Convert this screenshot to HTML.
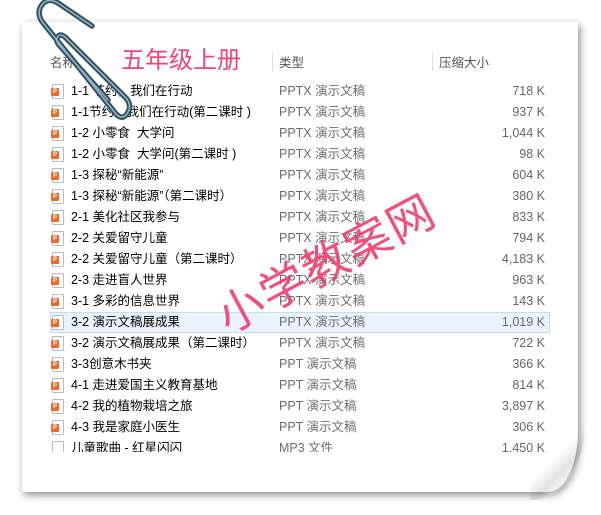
<!DOCTYPE html>
<html><head><meta charset="utf-8"><style>
*{margin:0;padding:0;box-sizing:border-box}
body{width:601px;height:515px;background:#fff;position:relative;overflow:hidden;font-family:"Liberation Sans","Noto Sans CJK SC",sans-serif}
.paper{position:absolute;left:22px;top:22px;width:556px;height:470px;background:#fff;box-shadow:2px 3px 8px rgba(0,0,0,.45);border-bottom-right-radius:30px 60px}
.curl{position:absolute;left:530px;top:420px;width:55px;height:80px;background:linear-gradient(135deg,rgba(255,255,255,0) 45%,rgba(0,0,0,.18) 62%,#fff 78%);border-bottom-right-radius:50px 80px;opacity:.6}
.list{position:absolute;left:50px;top:0;width:500px;height:452px;overflow:hidden}
.row{position:absolute;left:0;height:21px;width:500px;font-size:12.5px;line-height:21px}
.name{position:absolute;left:21px;color:#000}
.type{position:absolute;left:229px;color:#6d6d6d}
.size{position:absolute;right:5px;color:#666}
.ic{position:absolute;left:2px;top:3px;width:12px;height:15px;border:1px solid #bbb;border-radius:1px;background:#fff}
.ic::after{content:"P";font:bold 6px/8px "Liberation Sans",sans-serif;color:#fff;text-align:center;position:absolute;left:-2px;top:3px;width:8px;height:8px;background:#ec6a2a;border-radius:1px}
.ic.m::after{display:none}
.sel{background:#eaf3fd;border:1px solid #c4dcf4}
.hd{position:absolute;top:52px;font-size:12.5px;color:#555}
.title{position:absolute;left:121px;top:40px;font-size:24px;color:#f0457b;font-family:"Noto Sans CJK SC",sans-serif}
.wm{position:absolute;left:205px;top:228px;font-size:46px;color:rgba(240,60,110,.9);transform:rotate(-28deg);transform-origin:center;letter-spacing:2px;font-family:"Noto Sans CJK SC",sans-serif;white-space:nowrap}
</style></head><body>
<div class="paper"></div>
<div class="curl"></div>
<div class="hd" style="left:50px">名称</div>
<div class="hd" style="left:272px;border-left:1px solid #dde;padding-left:6px">类型</div>
<div class="hd" style="left:432px;border-left:1px solid #dde;padding-left:6px">压缩大小</div>
<div class="title">五年级上册</div>
<div class="list">
<div class="row" style="top:81px"><i class="ic"></i><span class="name">1-1 节约，我们在行动</span><span class="type">PPTX 演示文稿</span><span class="size">718 K</span></div>
<div class="row" style="top:102px"><i class="ic"></i><span class="name">1-1节约，我们在行动(第二课时 )</span><span class="type">PPTX 演示文稿</span><span class="size">937 K</span></div>
<div class="row" style="top:123px"><i class="ic"></i><span class="name">1-2 小零食&nbsp; 大学问</span><span class="type">PPTX 演示文稿</span><span class="size">1,044 K</span></div>
<div class="row" style="top:144px"><i class="ic"></i><span class="name">1-2 小零食&nbsp; 大学问(第二课时 )</span><span class="type">PPTX 演示文稿</span><span class="size">98 K</span></div>
<div class="row" style="top:165px"><i class="ic"></i><span class="name">1-3 探秘“新能源”</span><span class="type">PPTX 演示文稿</span><span class="size">604 K</span></div>
<div class="row" style="top:186px"><i class="ic"></i><span class="name">1-3 探秘“新能源”（第二课时）</span><span class="type">PPTX 演示文稿</span><span class="size">380 K</span></div>
<div class="row" style="top:207px"><i class="ic"></i><span class="name">2-1 美化社区我参与</span><span class="type">PPTX 演示文稿</span><span class="size">833 K</span></div>
<div class="row" style="top:228px"><i class="ic"></i><span class="name">2-2 关爱留守儿童</span><span class="type">PPTX 演示文稿</span><span class="size">794 K</span></div>
<div class="row" style="top:249px"><i class="ic"></i><span class="name">2-2 关爱留守儿童（第二课时）</span><span class="type">PPTX 演示文稿</span><span class="size">4,183 K</span></div>
<div class="row" style="top:270px"><i class="ic"></i><span class="name">2-3 走进盲人世界</span><span class="type">PPTX 演示文稿</span><span class="size">963 K</span></div>
<div class="row" style="top:291px"><i class="ic"></i><span class="name">3-1 多彩的信息世界</span><span class="type">PPTX 演示文稿</span><span class="size">143 K</span></div>
<div class="row sel" style="top:312px"><i class="ic" style="left:1px;top:2px"></i><span class="name" style="left:20px;line-height:19px">3-2 演示文稿展成果</span><span class="type" style="left:228px;line-height:19px">PPTX 演示文稿</span><span class="size" style="right:4px;line-height:19px">1,019 K</span></div>
<div class="row" style="top:333px"><i class="ic"></i><span class="name">3-2 演示文稿展成果（第二课时）</span><span class="type">PPTX 演示文稿</span><span class="size">722 K</span></div>
<div class="row" style="top:354px"><i class="ic"></i><span class="name">3-3创意木书夹</span><span class="type">PPT 演示文稿</span><span class="size">366 K</span></div>
<div class="row" style="top:375px"><i class="ic"></i><span class="name">4-1 走进爱国主义教育基地</span><span class="type">PPT 演示文稿</span><span class="size">814 K</span></div>
<div class="row" style="top:396px"><i class="ic"></i><span class="name">4-2 我的植物栽培之旅</span><span class="type">PPT 演示文稿</span><span class="size">3,897 K</span></div>
<div class="row" style="top:417px"><i class="ic"></i><span class="name">4-3 我是家庭小医生</span><span class="type">PPT 演示文稿</span><span class="size">306 K</span></div>
<div class="row" style="top:438px"><i class="ic m"></i><span class="name">儿童歌曲 - 红星闪闪</span><span class="type">MP3 文件</span><span class="size">1,450 K</span></div>
</div>
<div class="wm">小学教案网</div>
<svg style="position:absolute;left:0;top:0" width="150" height="140" viewBox="0 0 150 140">
<path d="M92 26 L58 3 Q46 -4 40 8 Q37 16 44 24 L116 114 Q124 122 129 110 Q131 104 126 98 L66 38 Q60 32 57 38 Q56 42 60 46 L108 100" fill="none" stroke="#34505f" stroke-width="5.5" stroke-linecap="round" stroke-linejoin="round"/>
<path d="M92 26 L58 3 Q46 -4 40 8 Q37 16 44 24 L116 114 Q124 122 129 110 Q131 104 126 98 L66 38 Q60 32 57 38 Q56 42 60 46 L108 100" fill="none" stroke="#8fb2c6" stroke-width="1.6" stroke-linecap="round" stroke-linejoin="round"/>
</svg>
</body></html>
